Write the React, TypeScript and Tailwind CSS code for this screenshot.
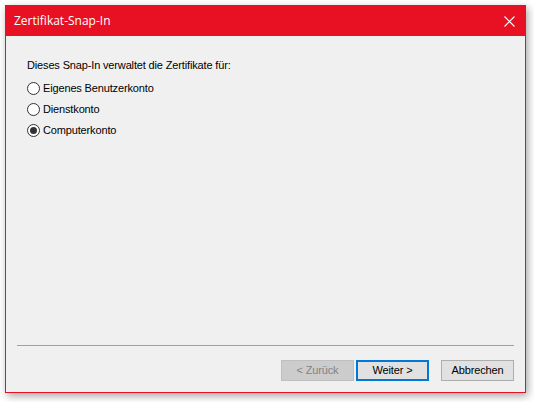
import { useState } from "react";

const options = ["Eigenes Benutzerkonto", "Dienstkonto", "Computerkonto"];

const Radio = ({ checked }: { checked: boolean }) => (
    <span className="w-[13px] h-[13px] rounded-full border border-[#333333] bg-white flex items-center justify-center shrink-0">
        {checked && <span className="w-[7px] h-[7px] rounded-full bg-[#333333]" />}
    </span>
);

const App = () => {
    const [selected, setSelected] = useState(2);

    return (
        <div className="w-[534px] h-[402px] bg-white pt-[5px] pl-[5px]" style={{ fontFamily: '"Liberation Sans", Arial, sans-serif' }}>
            <div className="w-[521px] h-[388px] border border-[#e81123] bg-[#f0f0f0] flex flex-col shadow-[2px_3px_8px_rgba(0,0,0,0.35)]">
                <div className="h-[30px] bg-[#e81123] flex items-center justify-between pl-[8px] pr-[10px]">
                    <span className="text-white text-[12px]" style={{ fontFamily: '"Open Sans", "Noto Sans", sans-serif' }}>
                        Zertifikat-Snap-In
                    </span>
                    <svg width="11" height="11" viewBox="0 0 11 11">
                        <path d="M0.5 0.5 L10.5 10.5 M10.5 0.5 L0.5 10.5" stroke="white" strokeWidth="1.1" />
                    </svg>
                </div>

                <div className="flex-1 flex flex-col">
                    <div className="pl-[21px] pt-[23px] text-[11px] tracking-[-0.15px] text-black flex-1">
                        <p className="leading-[13px]">Dieses Snap-In verwaltet die Zertifikate für:</p>
                        <div className="mt-[10px] flex flex-col gap-[8px]">
                            {options.map((opt, i) => (
                                <label key={opt} className="flex items-center gap-[3px] leading-[13px] cursor-default" onClick={() => setSelected(i)}>
                                    <Radio checked={selected === i} />
                                    <span>{opt}</span>
                                </label>
                            ))}
                        </div>
                    </div>

                    <hr className="mx-[11px] border-t border-[#a0a0a0]" />

                    <div className="flex justify-end pr-[11px] pt-[14px] pb-[11px] text-[11px] tracking-[-0.15px]">
                        <button disabled className="w-[73px] h-[21px] bg-[#cccccc] border border-[#bfbfbf] text-[#838383]">
                            &lt; Zurück
                        </button>
                        <button className="w-[73px] h-[21px] ml-[2px] bg-[#e1e1e1] border-2 border-[#0078d7] text-black">
                            Weiter &gt;
                        </button>
                        <button className="w-[73px] h-[21px] ml-[12px] bg-[#e1e1e1] border border-[#adadad] text-black">
                            Abbrechen
                        </button>
                    </div>
                </div>
            </div>
        </div>
    );
};

export default App;
